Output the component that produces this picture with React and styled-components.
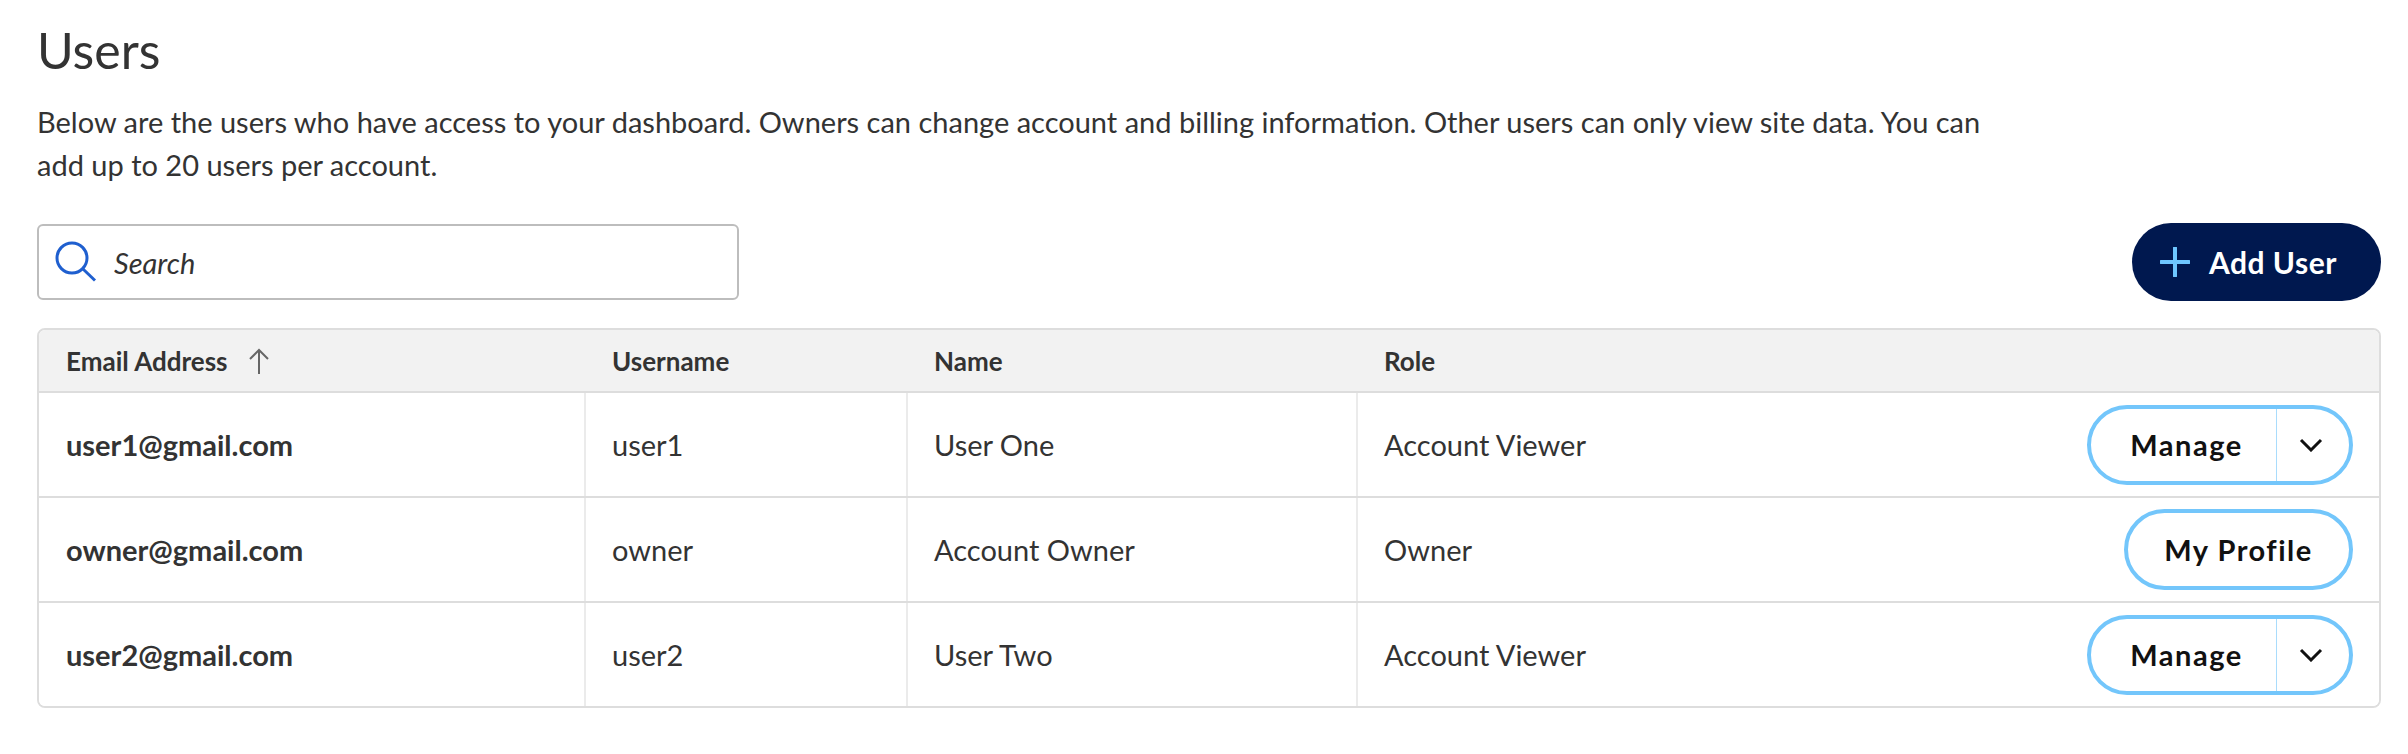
import React from "react";
import styled, { createGlobalStyle } from "styled-components";

const GlobalStyle = createGlobalStyle`
  body {
    margin: 0;
    background: #ffffff;
    font-family: Lato, "Liberation Sans", sans-serif;
    color: #333333;
  }
  * {
    box-sizing: border-box;
  }
`;

const Page = styled.main`
  padding: 20px 27px 40px 37px;
`;

const Title = styled.h1`
  margin: 0 0 20px;
  font-size: 50px;
  line-height: 60px;
  font-weight: 400;
  color: #333333;
`;

const Intro = styled.p`
  margin: 0;
  max-width: 1960px;
  font-size: 29px;
  line-height: 43px;
  color: #333333;
`;

const Toolbar = styled.div`
  display: flex;
  justify-content: space-between;
  align-items: center;
  margin-top: 37px;
`;

const SearchBox = styled.label`
  display: flex;
  align-items: center;
  gap: 15px;
  width: 702px;
  height: 76px;
  padding-left: 16px;
  border: 2px solid #bdbdbd;
  border-radius: 6px;
  background: #ffffff;

  input {
    flex: 1;
    border: none;
    outline: none;
    background: transparent;
    font-family: inherit;
    font-size: 29px;
    font-style: italic;
    color: #333333;
    &::placeholder {
      color: #333333;
      opacity: 1;
    }
  }
`;

const AddButton = styled.button`
  display: flex;
  align-items: center;
  gap: 19px;
  width: 249px;
  height: 78px;
  padding: 0 0 0 28px;
  border: none;
  border-radius: 39px;
  background: #00184f;
  color: #ffffff;
  font-family: inherit;
  font-size: 30px;
  font-weight: 700;
  letter-spacing: 0.5px;
  cursor: pointer;
`;

const Table = styled.div`
  margin-top: 27px;
  border: 2px solid #dddddd;
  border-radius: 8px;
  overflow: hidden;
`;

const Row = styled.div`
  display: grid;
  grid-template-columns: 545px 322px 450px 1fr;
  height: ${(p) => (p.$head ? "61px" : "105px")};
  background: ${(p) => (p.$head ? "#f2f2f2" : "#ffffff")};
  & + & {
    border-top: 2px solid #dddddd;
  }
`;

const Cell = styled.div`
  display: flex;
  align-items: center;
  justify-content: ${(p) => (p.$spread ? "space-between" : "flex-start")};
  gap: 16px;
  padding: 0 26px 0 ${(p) => (p.$first ? "27px" : "26px")};
  border-left: ${(p) => (p.$first || p.$head ? "none" : "2px solid #ebebeb")};
  font-size: ${(p) => (p.$head ? "26px" : "29px")};
  font-weight: ${(p) => (p.$head || p.$strong ? 700 : 400)};
  color: #333333;
  white-space: nowrap;
`;

const HeadCell = styled(Cell)`
  padding-left: ${(p) => (p.$first ? "27px" : "28px")};
`;

const SortIcon = styled.svg`
  width: 22px;
  height: 26px;
  margin-left: 4px;
`;

const SplitButton = styled.div`
  display: flex;
  width: 266px;
  height: 80px;
  border: 4px solid #73c6fb;
  border-radius: 40px;
  overflow: hidden;
  background: #ffffff;
`;

const SplitMain = styled.button`
  flex: 1;
  border: none;
  border-right: 1px solid #a9dcfc;
  background: transparent;
  font-family: inherit;
  font-size: 29px;
  font-weight: 700;
  letter-spacing: 1.5px;
  color: #111111;
  padding: 0 0 0 6px;
  cursor: pointer;
`;

const SplitToggle = styled.button`
  display: grid;
  place-content: center;
  width: 72px;
  border: none;
  background: transparent;
  padding: 0 4px 0 0;
  cursor: pointer;
`;

const PillButton = styled.button`
  width: 229px;
  height: 81px;
  border: 4px solid #73c6fb;
  border-radius: 41px;
  background: #ffffff;
  font-family: inherit;
  font-size: 29px;
  font-weight: 700;
  letter-spacing: 1.5px;
  color: #111111;
  cursor: pointer;
`;

const users = [
  { email: "user1@gmail.com", username: "user1", name: "User One", role: "Account Viewer", self: false },
  { email: "owner@gmail.com", username: "owner", name: "Account Owner", role: "Owner", self: true },
  { email: "user2@gmail.com", username: "user2", name: "User Two", role: "Account Viewer", self: false },
];

function SearchIcon() {
  return (
    <svg width="42" height="42" viewBox="0 0 42 42" fill="none">
      <circle cx="17" cy="17" r="15" stroke="#1f5fcf" strokeWidth="3" />
      <line x1="28" y1="28" x2="40" y2="39.5" stroke="#1f5fcf" strokeWidth="3" />
    </svg>
  );
}

function PlusIcon() {
  return (
    <svg width="30" height="30" viewBox="0 0 30 30" fill="none">
      <path d="M15 1v28M1 15h28" stroke="#6ec6ff" strokeWidth="4" strokeLinecap="round" />
    </svg>
  );
}

function ChevronIcon() {
  return (
    <svg width="24" height="14" viewBox="0 0 24 14" fill="none">
      <path d="M2 2l10 10L22 2" stroke="#111111" strokeWidth="3" />
    </svg>
  );
}

export default function App() {
  return (
    <>
      <GlobalStyle />
      <Page>
        <Title>Users</Title>
        <Intro>
          Below are the users who have access to your dashboard. Owners can change account and
          billing information. Other users can only view site data. You can add up to 20 users per
          account.
        </Intro>

        <Toolbar>
          <SearchBox>
            <SearchIcon />
            <input placeholder="Search" />
          </SearchBox>
          <AddButton>
            <PlusIcon />
            Add User
          </AddButton>
        </Toolbar>

        <Table>
          <Row $head>
            <HeadCell $head $first>
              Email Address
              <SortIcon viewBox="0 0 22 26" fill="none">
                <path d="M11 2v24M2 11l9-9 9 9" stroke="#666666" strokeWidth="2" />
              </SortIcon>
            </HeadCell>
            <HeadCell $head>Username</HeadCell>
            <HeadCell $head>Name</HeadCell>
            <HeadCell $head>Role</HeadCell>
          </Row>
          {users.map((u) => (
            <Row key={u.email}>
              <Cell $first $strong>
                {u.email}
              </Cell>
              <Cell>{u.username}</Cell>
              <Cell>{u.name}</Cell>
              <Cell $spread>
                {u.role}
                {u.self ? (
                  <PillButton>My Profile</PillButton>
                ) : (
                  <SplitButton>
                    <SplitMain>Manage</SplitMain>
                    <SplitToggle>
                      <ChevronIcon />
                    </SplitToggle>
                  </SplitButton>
                )}
              </Cell>
            </Row>
          ))}
        </Table>
      </Page>
    </>
  );
}
